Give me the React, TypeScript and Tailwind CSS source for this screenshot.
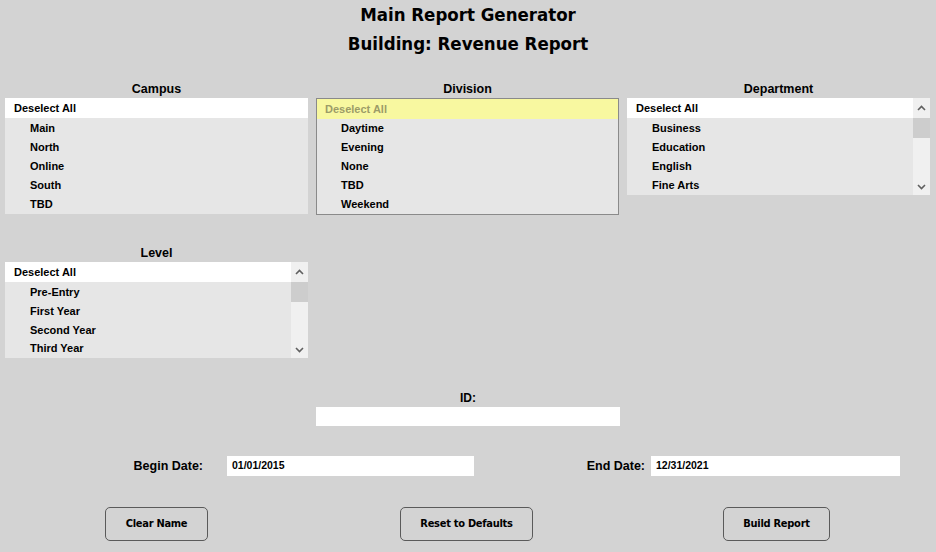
import React from 'react';

const listFont = { fontFamily: '"Liberation Sans", Arial, sans-serif' };
const titleFont = { fontFamily: '"Liberation Sans Narrow", "DejaVu Sans Condensed", "Liberation Sans", sans-serif' };

interface ListBoxProps {
  title: string;
  items: string[];
  height: string;
  scroll?: boolean;
  focused?: boolean;
}

const ScrollBar: React.FC = () => (
  <div className="w-[17px] bg-[#f0f0f0] flex flex-col items-center">
    <div className="h-[20px] flex items-center justify-center">
      <svg width="9" height="6" viewBox="0 0 9 6">
        <path d="M1 5 L4.5 1.5 L8 5" fill="none" stroke="#606060" strokeWidth="1.6" />
      </svg>
    </div>
    <div className="w-full h-[20px] bg-[#cdcdcd]" />
    <div className="flex-1" />
    <div className="h-[17px] flex items-center justify-center">
      <svg width="9" height="6" viewBox="0 0 9 6">
        <path d="M1 1 L4.5 4.5 L8 1" fill="none" stroke="#606060" strokeWidth="1.6" />
      </svg>
    </div>
  </div>
);

const ListBox: React.FC<ListBoxProps> = ({ title, items, height, scroll, focused }) => (
  <div className="w-[303px] flex flex-col">
    <div className="text-[12.5px] font-bold text-center leading-[14px] mb-[2px] text-black" style={listFont}>
      {title}
    </div>
    <div
      className={`flex overflow-hidden bg-[#e6e6e6] ${height} ${focused ? 'border border-[#8a8a8a]' : ''}`}
      style={listFont}
    >
      <div className="flex-1 flex flex-col">
        <div
          className={`flex items-center text-[11px] font-bold ${
            focused ? 'h-[20px] bg-[#f8f8a0] text-[#9c9c68] pl-[8px]' : 'h-[20px] mb-[1px] bg-white text-black pl-[9px]'
          }`}
        >
          Deselect All
        </div>
        {items.map((it) => (
          <div
            key={it}
            className={`h-[19px] flex items-center text-[11px] font-bold text-black ${focused ? 'pl-[24px]' : 'pl-[25px]'}`}
          >
            {it}
          </div>
        ))}
      </div>
      {scroll && <ScrollBar />}
    </div>
  </div>
);

const Button: React.FC<{ label: string; w: string }> = ({ label, w }) => (
  <button
    className={`${w} h-[34px] rounded-[5px] border border-[#5a5a5a] bg-[#d3d3d3] text-[11px] font-bold text-black tracking-tight`}
    style={titleFont}
  >
    {label}
  </button>
);

export default function App() {
  return (
    <div className="w-[936px] h-[552px] bg-[#d3d3d3] overflow-hidden text-black">
      {/* Header */}
      <div className="pt-[4px] flex flex-col items-center" style={titleFont}>
        <div className="text-[18.5px] font-bold leading-[22px]">Main Report Generator</div>
        <div className="text-[18.5px] font-bold leading-[22px] mt-[7px]">Building: Revenue Report</div>
      </div>

      {/* Top lists */}
      <div className="flex px-[5px] gap-[8px] mt-[27px] items-start">
        <ListBox title="Campus" items={['Main', 'North', 'Online', 'South', 'TBD']} height="h-[116px]" />
        <ListBox
          title="Division"
          items={['Daytime', 'Evening', 'None', 'TBD', 'Weekend']}
          height="h-[117px]"
          focused
        />
        <ListBox
          title="Department"
          items={['Business', 'Education', 'English', 'Fine Arts']}
          height="h-[97px]"
          scroll
        />
      </div>

      {/* Level */}
      <div className="flex px-[5px] mt-[31px]">
        <ListBox
          title="Level"
          items={['Pre-Entry', 'First Year', 'Second Year', 'Third Year']}
          height="h-[96px]"
          scroll
        />
      </div>

      {/* ID */}
      <div className="flex flex-col items-center mt-[33px]" style={listFont}>
        <div className="text-[12px] font-bold leading-[14px]">ID:</div>
        <div className="w-[304px] h-[19px] bg-white mt-[2px]" />
      </div>

      {/* Dates */}
      <div className="flex items-center mt-[30px]" style={listFont}>
        <div className="w-[203px] text-right text-[12.5px] font-bold">Begin Date:</div>
        <div className="ml-[24px] w-[247px] h-[20px] bg-white flex items-center pl-[5px] text-[10.5px] font-bold">
          01/01/2015
        </div>
        <div className="w-[171px] text-right text-[12.5px] font-bold">End Date:</div>
        <div className="ml-[6px] w-[249px] h-[20px] bg-white flex items-center pl-[5px] text-[10.5px] font-bold">
          12/31/2021
        </div>
      </div>

      {/* Buttons */}
      <div className="flex mt-[31px]">
        <div className="ml-[105px]">
          <Button label="Clear Name" w="w-[103px]" />
        </div>
        <div className="ml-[192px]">
          <Button label="Reset to Defaults" w="w-[133px]" />
        </div>
        <div className="ml-[190px]">
          <Button label="Build Report" w="w-[107px]" />
        </div>
      </div>
    </div>
  );
}
